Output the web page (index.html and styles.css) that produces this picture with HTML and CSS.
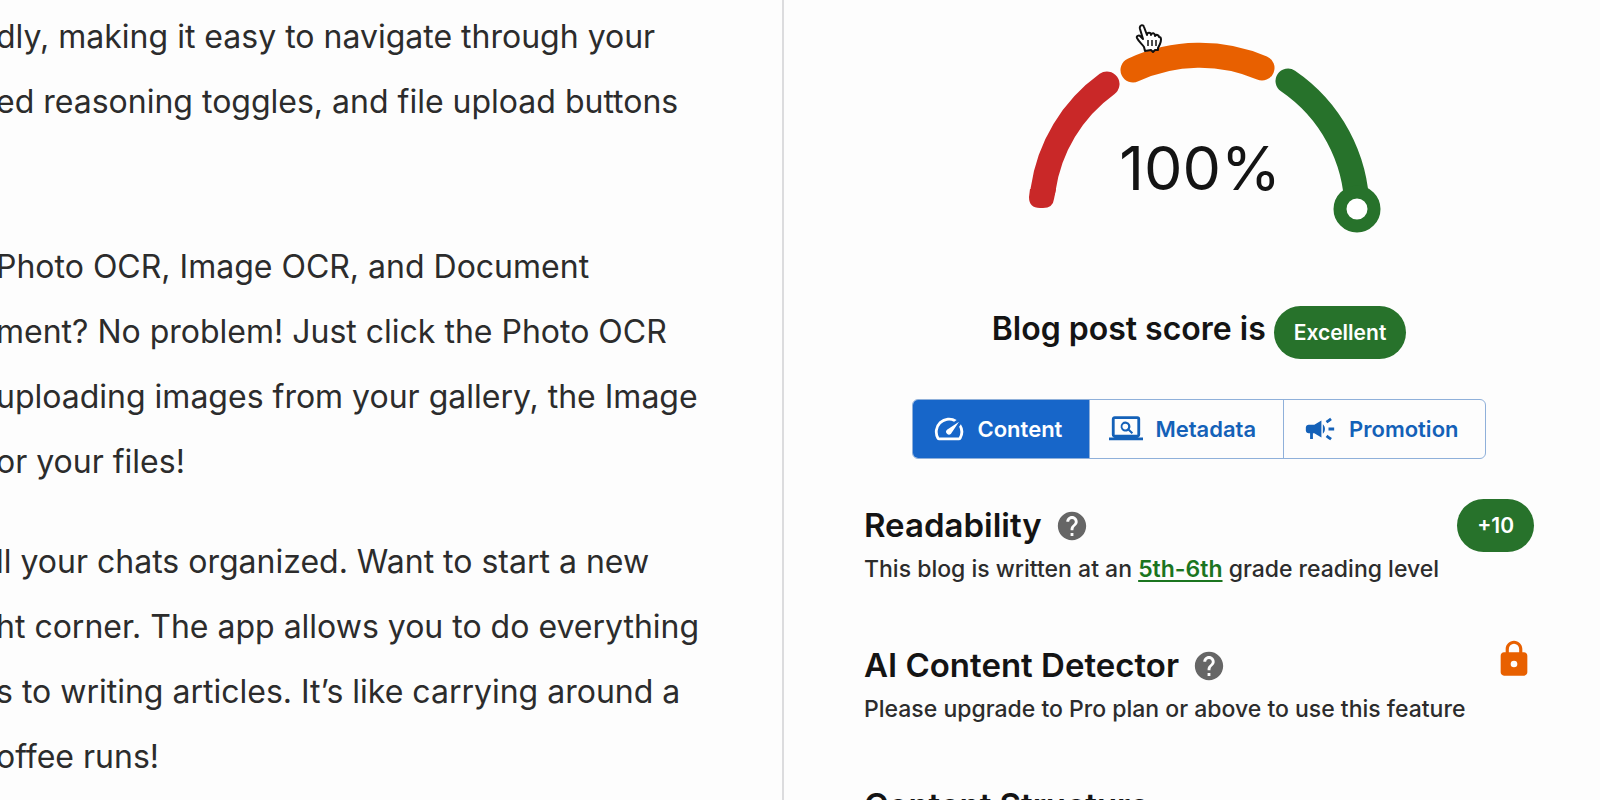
FILE: index.html
```html
<!DOCTYPE html>
<html lang="en">
<head>
  <meta charset="utf-8">
  <title>Blog post score</title>
  <meta name="viewport" content="width=device-width, initial-scale=1">
  <link rel="stylesheet" href="styles.css">
</head>
<body>
  <main class="layout">
    <article class="editor">
      <p>dly, making it easy to navigate through your<br>
        ed reasoning toggles, and file upload buttons<br>
        &nbsp;</p>
      <p>Photo OCR, Image OCR, and Document<br>
        ment? No problem! Just click the Photo OCR<br>
        uploading images from your gallery, the Image<br>
        or your files!</p>
      <p>ll your chats organized. Want to start a new<br>
        ht corner. The app allows you to do everything<br>
        s to writing articles. It’s like carrying around a<br>
        offee runs!</p>
    </article>

    <aside class="panel">
      <div class="gauge">
        <svg class="gauge-chart" viewBox="0 0 400 240" role="img" aria-label="Score 100%">
          <g fill="none" stroke-width="25">
            <path stroke="#c92828" stroke-linecap="round" d="M44 190A158 158 0 0 1 108 84"/>
            <path stroke="#e86000" stroke-linecap="round" d="M134 70A158 158 0 0 1 263 68"/>
            <path stroke="#27722b" stroke-linecap="round" d="M289 81A158 158 0 0 1 358 209"/>
          </g>
          <!-- flatter foot of the red arc -->
          <path fill="#c92828" d="M31 189L30 197Q30 208 41 208H44Q54 208 55 199L57 189Z"/>
          <circle cx="358" cy="209" r="17" fill="#fff" stroke="#27722b" stroke-width="13"/>
          <text x="201" y="190" text-anchor="middle">100%</text>
        </svg>
        <svg class="cursor" viewBox="0 0 28 30">
          <path fill="#fff" stroke="#111" stroke-width="2" stroke-linejoin="round" d="M10 27L9 23C7 20 4 18 2 14C1 12 4 11 5 12L8 15L5 5C4 1 8 0 9 3L12 11C12 8 16 8 16 11C17 8 20 9 20 12C21 10 24 11 24 13C27 13 26 17 25 20L23 24L23 26L20 26L18 28L16 26Z"/>
          <path fill="none" stroke="#111" stroke-width="1.5" d="M13 16V22M17 16V22M21 16V22"/>
        </svg>
      </div>

      <h2 class="score">Blog post score is <span class="chip">Excellent</span></h2>

      <div class="tabs">
        <button class="tab active" type="button">
          <svg viewBox="0 0 24 24"><path d="M20.38 8.57l-1.23 1.85a8 8 0 0 1-.22 7.58H5.07A8 8 0 0 1 15.58 6.85l1.85-1.23A10 10 0 0 0 3.35 19a2 2 0 0 0 1.72 1h13.85a2 2 0 0 0 1.74-1 10 10 0 0 0-.27-10.44z"/><path d="M10.59 15.41a2 2 0 0 0 2.83 0l5.66-8.49-8.49 5.66a2 2 0 0 0 0 2.83z"/></svg>
          Content
        </button>
        <button class="tab" type="button">
          <svg viewBox="0 0 24 24"><path d="M20 18c1.1 0 2-.9 2-2V5a2 2 0 0 0-2-2H4c-1.100 0-2 .9-2 2v11c0 1.100.9 2 2 2H0v2h24v-2zM4 5h16v11H4z"/><path d="M14.600 12.200a3.500 3.500 0 1 0-1 1l2.400 2.300 1-1zM11.500 12.300a2 2 0 1 1 0-4 2 2 0 0 1 0 4z"/></svg>
          Metadata
        </button>
        <button class="tab" type="button">
          <svg viewBox="0 0 24 24"><path d="M18 11v2h4v-2zM16 17.610c.96.710 2.210 1.650 3.200 2.390.4-.53.8-1.070 1.200-1.600-.99-.74-2.240-1.680-3.200-2.400-.4.540-.8 1.080-1.200 1.610zM20.400 5.600c-.4-.53-.8-1.070-1.200-1.600-.99.740-2.240 1.680-3.200 2.400.4.530.8 1.070 1.200 1.600.96-.72 2.210-1.650 3.200-2.400zM4 9c-1.100 0-2 .9-2 2v2c0 1.100.9 2 2 2h1v4h2v-4h1l5 3V6L8 9zM15.500 12c0-1.330-.58-2.530-1.500-3.350v6.690c.92-.81 1.500-2.010 1.500-3.340z"/></svg>
          Promotion
        </button>
      </div>

      <section class="check">
        <div class="check-body">
          <h3>Readability
            <svg class="help" viewBox="0 0 24 24"><path d="M12 2C6.480 2 2 6.480 2 12s4.480 10 10 10 10-4.480 10-10S17.520 2 12 2zm1 17h-2v-2h2zm2.070-7.750l-.9.920C13.450 12.900 13 13.500 13 15h-2v-.5c0-1.100.45-2.100 1.170-2.830l1.240-1.260c.37-.36.590-.86.590-1.410 0-1.100-.9-2-2-2s-2 .9-2 2H8c0-2.210 1.790-4 4-4s4 1.790 4 4c0 .88-.36 1.680-.93 2.250z"/></svg>
          </h3>
          <p>This blog is written at an <a href="#">5th-6th</a> grade reading level</p>
        </div>
        <span class="chip">+10</span>
      </section>

      <section class="check">
        <div class="check-body">
          <h3>AI Content Detector
            <svg class="help" viewBox="0 0 24 24"><path d="M12 2C6.480 2 2 6.480 2 12s4.480 10 10 10 10-4.480 10-10S17.520 2 12 2zm1 17h-2v-2h2zm2.070-7.750l-.9.920C13.450 12.900 13 13.500 13 15h-2v-.5c0-1.100.45-2.100 1.170-2.830l1.240-1.260c.37-.36.590-.86.590-1.410 0-1.100-.9-2-2-2s-2 .9-2 2H8c0-2.210 1.790-4 4-4s4 1.790 4 4c0 .88-.36 1.680-.93 2.250z"/></svg>
          </h3>
          <p>Please upgrade to Pro plan or above to use this feature</p>
        </div>
        <svg class="lock" viewBox="0 0 24 24"><path d="M18 8h-1V6c0-2.760-2.240-5-5-5S7 3.240 7 6v2H6c-1.100 0-2 .9-2 2v10c0 1.100.9 2 2 2h12c1.100 0 2-.9 2-2V10c0-1.100-.9-2-2-2zm-6 9a2 2 0 1 1 0-4 2 2 0 0 1 0 4zM15.100 8H8.900V6a3.100 3.100 0 0 1 6.200 0z"/></svg>
      </section>

      <section class="check">
        <div class="check-body">
          <h3>Content Structure</h3>
        </div>
      </section>
    </aside>
  </main>
</body>
</html>
```
FILE: styles.css
```css
* {box-sizing: border-box;}
body {margin: 0; background: #fdfdfd; font-family: Inter, "Liberation Sans", sans-serif; overflow: hidden;}
.layout {display: grid; grid-template-columns: 49% 51%; height: 100vh;}

.editor {overflow: hidden; border-right: 2px solid #dcdcde; padding-top: 4px;}
.editor p {margin: 0 0 35px -4px; font-size: 32px; line-height: 65px; color: #2c2c2c; white-space: nowrap;}

.panel {overflow: hidden; padding: 0 66px 0 80px; color: #141414;}
.gauge {position: relative; width: 400px; margin: 0 auto;}
.gauge-chart {display: block; width: 100%;}
.gauge-chart text {font-size: 61px; fill: #141414;}
.cursor {position: absolute; left: 136px; top: 24px; width: 28px; height: 30px;}

.score {display: flex; align-items: baseline; justify-content: center; gap: 8px; margin: 62px 0 40px; font-size: 32px; font-weight: 600; line-height: 53px; white-space: nowrap;}
.chip {padding: 0 20px; border-radius: 27px; background: #27722b; color: #fff; font-size: 21px; font-weight: 600; line-height: 53px;}

.tabs {display: flex; width: max-content; margin: 0 auto 40px; border: 1px solid #8fb0da; border-radius: 6px; overflow: hidden;}
.tab {display: flex; align-items: center; gap: 12px; height: 58px; padding: 0 27px 0 19px; border: 0; border-left: 1px solid #8fb0da; background: none; color: #1461b8; font: 600 22px Inter, "Liberation Sans", sans-serif;}
.tab:first-child {border-left: 0;}
.tab.active {background: #1766c9; color: #fff;}
.tab svg {width: 34px; height: 34px; fill: currentColor;}

.check {display: flex; align-items: flex-start; justify-content: space-between; height: 140px;}
.check h3 {display: flex; align-items: center; gap: 13px; margin: 0; font-size: 33px; font-weight: 600; line-height: 53px; white-space: nowrap;}
.check p {margin: 0; font-size: 23px; font-weight: 500; line-height: 34px; color: #2c2c2c; white-space: nowrap;}
.check a {color: #1b751f; font-weight: 600; text-underline-offset: 3px;}
.help {width: 34px; height: 34px; fill: #666;}
.lock {width: 40px; height: 40px; fill: #e86000;}
```
